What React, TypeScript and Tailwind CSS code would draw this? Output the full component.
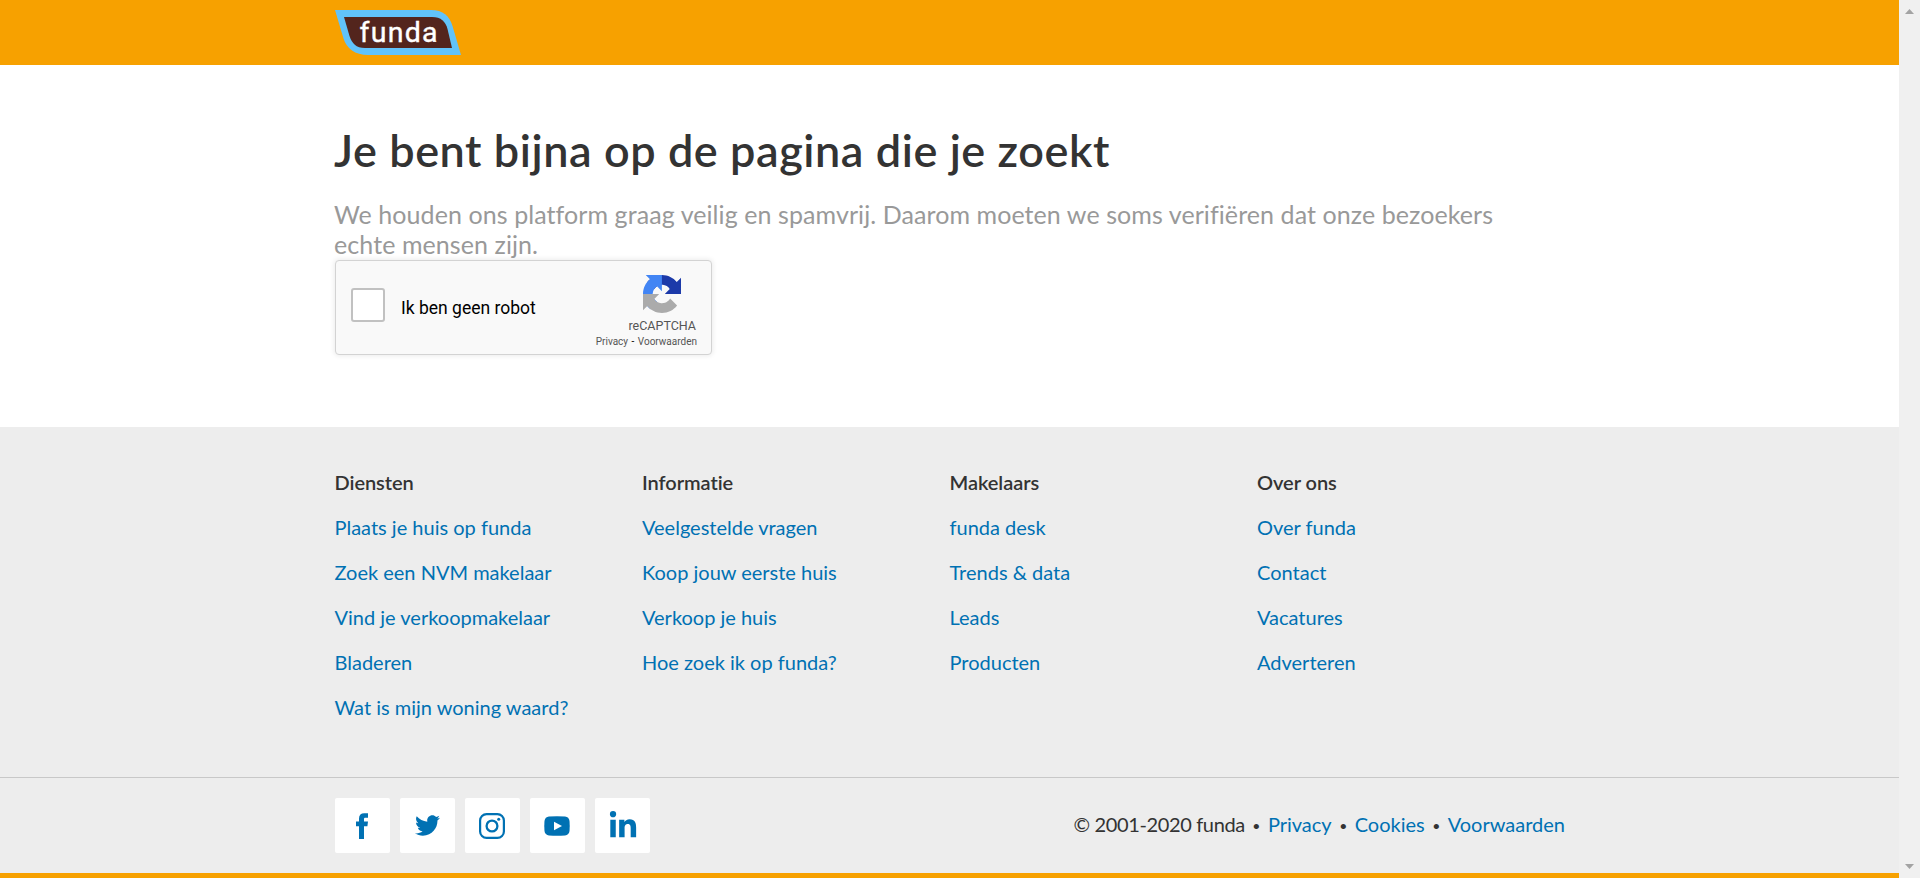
import { Fragment } from "react";
import type { ReactNode } from "react";
import { FaLinkedinIn, FaTwitter } from "react-icons/fa";

const columns: { title: string; links: string[] }[] = [
  {
    title: "Diensten",
    links: [
      "Plaats je huis op funda",
      "Zoek een NVM makelaar",
      "Vind je verkoopmakelaar",
      "Bladeren",
      "Wat is mijn woning waard?",
    ],
  },
  {
    title: "Informatie",
    links: ["Veelgestelde vragen", "Koop jouw eerste huis", "Verkoop je huis", "Hoe zoek ik op funda?"],
  },
  { title: "Makelaars", links: ["funda desk", "Trends & data", "Leads", "Producten"] },
  { title: "Over ons", links: ["Over funda", "Contact", "Vacatures", "Adverteren"] },
];

function FundaLogo() {
  return (
    <svg width="126" height="45" viewBox="0 0 126 45" role="img" aria-label="funda">
      <path d="M0 0H96C108 0 114.500 6 117.500 16L126 45H33C20 45 11.500 38.500 8.500 28.500Z" fill="#61c3fa" />
      <path d="M9 7H97C106 7 110.500 11.500 112.500 19L117 38H30C21 38 17 33.500 14.500 26Z" fill="#53251d" />
      <text
        x="24.500"
        y="32"
        fill="#fff"
        stroke="#fff"
        strokeWidth="0.400"
        fontFamily="Roboto, sans-serif"
        fontWeight="400"
        fontSize="28.500"
        textLength="78"
        lengthAdjust="spacing"
      >
        funda
      </text>
    </svg>
  );
}

function RecaptchaLogo() {
  return (
    <svg width="38" height="38" viewBox="0 0 64 64">
      <path
        fill="#1c3aa9"
        d="M64 31.955l-.033-1.37V4.687l-7.16 7.16C50.948 4.674 42.033.093 32.05.093c-10.4 0-19.622 4.96-25.458 12.64l11.736 11.86a15.55 15.55 0 0 1 4.754-5.334c2.05-1.6 4.952-2.906 8.968-2.906.485 0 .86.057 1.135.163 4.976.393 9.288 3.14 11.828 7.124l-8.307 8.307L64 31.953"
      />
      <path
        fill="#4285f4"
        d="M31.862.094l-1.37.033H4.594l7.16 7.16C4.58 13.147 0 22.06 0 32.046c0 10.4 4.96 19.622 12.64 25.458L24.5 45.768a15.55 15.55 0 0 1-5.334-4.754c-1.6-2.05-2.906-4.952-2.906-8.968 0-.485.057-.86.163-1.135.393-4.976 3.14-9.288 7.124-11.828l8.307 8.307L31.86.095"
      />
      <path
        fill="#ababab"
        d="M.001 32.045l.033 1.37v25.898l7.16-7.16c5.86 7.173 14.774 11.754 24.76 11.754 10.4 0 19.622-4.96 25.458-12.64l-11.736-11.86a15.55 15.55 0 0 1-4.754 5.334c-2.05 1.6-4.952 2.906-8.968 2.906-.485 0-.86-.057-1.135-.163-4.976-.393-9.288-3.14-11.828-7.124l8.307-8.307c-10.522.04-22.4.066-27.295-.005"
      />
    </svg>
  );
}

function FacebookIcon() {
  return (
    <svg width="12" height="26" viewBox="0 0 12 26" fill="currentColor" className="mr-px">
      <path d="M3 26V13.200H0V8.500H3V5.500C3 2 5 .2 8.200.2H12V4.800H9.600C8.400 4.800 8 5.200 8 6.200V8.500H12L11.400 13.200H8V26Z" />
    </svg>
  );
}

function InstagramIcon() {
  return (
    <svg width="26" height="26" viewBox="0 0 26 26" fill="none" stroke="currentColor" className="mr-px">
      <rect x="1.100" y="1.100" width="23.800" height="23.800" rx="6.500" strokeWidth="2.200" />
      <circle cx="13" cy="13" r="5.400" strokeWidth="2.300" />
      <circle cx="19.700" cy="6.300" r="1.500" fill="currentColor" stroke="none" />
    </svg>
  );
}

function YoutubeIcon() {
  return (
    <svg width="26" height="20" viewBox="0 0 26 20" className="mr-px">
      <path
        fill="currentColor"
        d="M5 .6Q13 0 21 .6Q25 1 25.500 5Q26 10 25.500 15Q25 19 21 19.400Q13 20 5 19.400Q1 19 .5 15Q0 10 .5 5Q1 1 5 .6Z"
      />
      <path d="M10 5.800L18 10L10 14.200Z" fill="#fff" />
    </svg>
  );
}

function SocialTile({ label, children }: { label: string; children: ReactNode }) {
  return (
    <a
      aria-label={label}
      className="flex h-[55px] w-[55px] items-center justify-center rounded-[2px] bg-white text-[#0071b3]"
    >
      {children}
    </a>
  );
}

function Captcha() {
  return (
    <div className="mt-px flex h-[95px] w-[377px] rounded-[4px] border border-[#d3d3d3] bg-[#f9f9f9] font-[Roboto,sans-serif] shadow-[0_0_5px_1px_rgba(0,0,0,0.08)]">
      <div className="ml-[15px] mt-[27px] h-[34px] w-[34px] rounded-[3px] border-2 border-[#c1c1c1] bg-white" />
      <div className="ml-[16px] mt-[35px] text-[17.500px] leading-[24px] text-black">Ik ben geen robot</div>
      <div className="ml-auto mr-[14px] flex flex-col items-end text-[#555]">
        <div className="mr-[16px] mt-[14px] h-[38px]">
          <RecaptchaLogo />
        </div>
        <div className="mr-px mt-[4px] text-[12.500px] leading-[17px]">reCAPTCHA</div>
        <div className="mt-[2px] text-[10px] leading-[12px]">
          Privacy <span className="px-px text-black">-</span> Voorwaarden
        </div>
      </div>
    </div>
  );
}

export default function App() {
  return (
    <div className="flex h-[878px] w-full bg-white font-[Lato,sans-serif] text-[#333]">
      <div className="flex min-w-0 flex-1 flex-col">
        <header className="h-[65px] shrink-0 bg-[#f7a100] pl-[335px] pt-[10px]">
          <FundaLogo />
        </header>

        <main className="h-[362px] shrink-0 pl-[335px] pt-[58px]">
          <h1 className="-ml-px whitespace-nowrap pt-px text-[45px] font-semibold leading-[52px] tracking-[0.560px]">
            Je bent bijna op de pagina die je zoekt
          </h1>
          <p className="-ml-px mt-[23px] whitespace-nowrap text-[25px] leading-[30px] tracking-[0.080px] text-[#999]">
            We houden ons platform graag veilig en spamvrij. Daarom moeten we soms verifiëren dat onze bezoekers
            <br />
            echte mensen zijn.
          </p>
          <Captcha />
        </main>

        <footer className="flex flex-1 flex-col border-b-[5px] border-[#f7a100] bg-[#ededed] text-[20px]">
          <div className="flex h-[350px] pl-[334.500px] pt-[33px] leading-[45px]">
            {columns.map((column) => (
              <section key={column.title} className="w-[307.500px]">
                <h2 className="font-semibold tracking-[-0.050px]">{column.title}</h2>
                <ul>
                  {column.links.map((link) => (
                    <li key={link} className="text-[#0071b3]">
                      {link}
                    </li>
                  ))}
                </ul>
              </section>
            ))}
          </div>

          <div className="flex flex-1 items-center justify-between border-t border-[#c8c8c8] pl-[335px] pr-[334px]">
            <div className="flex gap-[10px]">
              <SocialTile label="Facebook">
                <FacebookIcon />
              </SocialTile>
              <SocialTile label="Twitter">
                <FaTwitter size={25} />
              </SocialTile>
              <SocialTile label="Instagram">
                <InstagramIcon />
              </SocialTile>
              <SocialTile label="YouTube">
                <YoutubeIcon />
              </SocialTile>
              <SocialTile label="LinkedIn">
                <FaLinkedinIn size={30} className="mt-px" />
              </SocialTile>
            </div>
            <div className="flex items-center pb-[3px]">
              <span className="tracking-[-0.360px]">© 2001-2020 funda</span>
              {["Privacy", "Cookies", "Voorwaarden"].map((label) => (
                <Fragment key={label}>
                  <span className="w-[23px] pt-[2px] text-center text-[14px]">•</span>
                  <a className="text-[#0071b3]">{label}</a>
                </Fragment>
              ))}
            </div>
          </div>
        </footer>
      </div>

      <div className="flex w-[21px] shrink-0 flex-col items-center justify-between bg-[#f0f0f0] py-[9px] pr-[1px]">
        <svg width="9" height="5" viewBox="0 0 9 5" fill="#a3a3a3">
          <path d="M4.500 0L9 5H0Z" />
        </svg>
        <svg width="9" height="5" viewBox="0 0 9 5" fill="#a3a3a3">
          <path d="M4.500 5L9 0H0Z" />
        </svg>
      </div>
    </div>
  );
}
